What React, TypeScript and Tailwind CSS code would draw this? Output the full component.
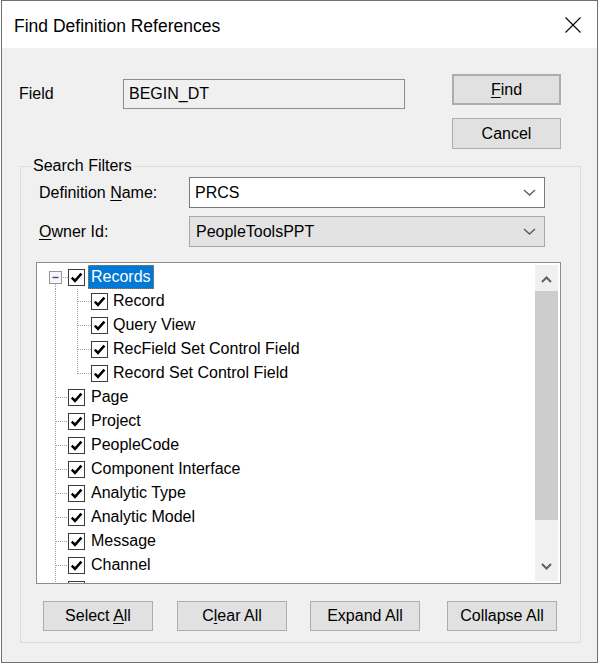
import React from 'react';

const childItems = ['Record', 'Query View', 'RecField Set Control Field', 'Record Set Control Field'];
const topItems = [
  'Page',
  'Project',
  'PeopleCode',
  'Component Interface',
  'Analytic Type',
  'Analytic Model',
  'Message',
  'Channel',
];

const DOT = '#a0a0a0';

function Check() {
  return (
    <div className="w-[17px] h-[17px] shrink-0 border border-[#3c3c3c] bg-white flex items-center justify-center">
      <svg width="13" height="13" viewBox="0 0 13 13">
        <path d="M1.8 6.6 L5 9.9 L11.4 2.6" fill="none" stroke="#000" strokeWidth="2.5" />
      </svg>
    </div>
  );
}

function TopGutter() {
  return (
    <svg width="31" height="24" className="shrink-0">
      <line x1="18.5" y1="0" x2="18.5" y2="24" stroke={DOT} strokeDasharray="1 1" />
      <line x1="19" y1="12.5" x2="31" y2="12.5" stroke={DOT} strokeDasharray="1 1" />
    </svg>
  );
}

function RootGutter() {
  return (
    <svg width="31" height="24" className="shrink-0">
      <rect x="12.5" y="6.5" width="12" height="12" fill="#f7f7f7" stroke="#969696" />
      <line x1="15.5" y1="12.5" x2="21.5" y2="12.5" stroke="#2e4f8f" strokeWidth="1.4" />
      <line x1="18.5" y1="19" x2="18.5" y2="24" stroke={DOT} strokeDasharray="1 1" />
      <line x1="26" y1="12.5" x2="31" y2="12.5" stroke={DOT} strokeDasharray="1 1" />
    </svg>
  );
}

function ChildGutter({ last }: { last: boolean }) {
  return (
    <svg width="54" height="24" className="shrink-0">
      <line x1="18.5" y1="0" x2="18.5" y2="24" stroke={DOT} strokeDasharray="1 1" />
      <line x1="40.5" y1="0" x2="40.5" y2={last ? 13 : 24} stroke={DOT} strokeDasharray="1 1" />
      <line x1="41" y1="12.5" x2="54" y2="12.5" stroke={DOT} strokeDasharray="1 1" />
    </svg>
  );
}

function ComboChevron() {
  return (
    <svg width="13" height="7" viewBox="0 0 13 7" className="shrink-0">
      <polyline points="1,1 6.5,6 12,1" fill="none" stroke="#5a5a5a" strokeWidth="1.3" />
    </svg>
  );
}

function ScrollChevron({ up }: { up: boolean }) {
  return (
    <svg width="11" height="7" viewBox="0 0 11 7">
      <polyline
        points={up ? '1,6 5.5,1.5 10,6' : '1,1 5.5,5.5 10,1'}
        fill="none"
        stroke="#606060"
        strokeWidth="2"
      />
    </svg>
  );
}

function DialogButton({ children, width = 'w-[110px]', className = '' }: { children: React.ReactNode; width?: string; className?: string }) {
  return (
    <div
      className={`${width} h-[30px] shrink-0 bg-[#e1e1e1] border border-[#adadad] flex items-center justify-center text-[16px] text-black ${className}`}
    >
      <span>{children}</span>
    </div>
  );
}

export default function App() {
  return (
    <div className="font-['Liberation_Sans',Arial,sans-serif] text-black">
      <div className="ml-[1px] w-[597px] h-[663px] border border-[#707070] flex flex-col bg-[#f0f0f0]">
        {/* Title bar */}
        <div className="h-[47px] shrink-0 bg-white flex items-center justify-between pl-[12px] pr-[16px] pt-[3px]">
          <span className="text-[17.5px]">Find Definition References</span>
          <svg width="16" height="16" viewBox="0 0 16 16" className="-mt-[2px]">
            <line x1="0.5" y1="0.5" x2="15.5" y2="15.5" stroke="#000" strokeWidth="1.1" />
            <line x1="15.5" y1="0.5" x2="0.5" y2="15.5" stroke="#000" strokeWidth="1.1" />
          </svg>
        </div>

        {/* Body */}
        <div className="flex-1 flex flex-col">
          <div className="flex pt-[26px] pl-[17px]">
            <div className="flex items-center mt-[5px] h-[30px]">
              <span className="w-[104px] text-[16px]">Field</span>
              <div className="w-[282px] h-[30px] border border-[#8c8c8c] bg-[#f0f0f0] flex items-center pl-[5px] text-[16px]">
                BEGIN_DT
              </div>
            </div>
            <div className="ml-[47px] flex flex-col gap-[13px]">
              <DialogButton width="w-[109px]" className="h-[31px] border-2 border-[#0078d7]">
                <span className="underline underline-offset-2">F</span>ind
              </DialogButton>
              <DialogButton width="w-[109px]" className="h-[31px]">
                Cancel
              </DialogButton>
            </div>
          </div>

          {/* Search Filters group */}
          <fieldset className="mt-[8px] ml-[18px] w-[561px] border border-[#dcdcdc] pb-[11px]">
            <legend className="ml-[10px] px-[2px] text-[16px] leading-[18px]">Search Filters</legend>

            <div className="mt-[2px] pl-[18px] flex items-center h-[31px]">
              <span className="w-[150px] text-[16px]">
                Definition <span className="underline underline-offset-2">N</span>ame:
              </span>
              <div className="w-[356px] h-[31px] border border-[#7a7a7a] bg-white flex items-center justify-between pl-[5px] pr-[8px] text-[16px]">
                <span>PRCS</span>
                <ComboChevron />
              </div>
            </div>

            <div className="mt-[8px] pl-[18px] flex items-center h-[31px]">
              <span className="w-[150px] text-[16px]">
                <span className="underline underline-offset-2">O</span>wner Id:
              </span>
              <div className="w-[356px] h-[31px] border border-[#a8a8a8] bg-[#e3e3e3] flex items-center justify-between pl-[6px] pr-[8px] text-[16px]">
                <span>PeopleToolsPPT</span>
                <ComboChevron />
              </div>
            </div>

            {/* Tree */}
            <div className="mt-[15px] ml-[15px] w-[525px] h-[322px] border border-[#8c8c8c] bg-white flex">
              <div className="flex-1 overflow-hidden pt-[2px] text-[16px]">
                <div className="flex items-center h-[24px]">
                  <RootGutter />
                  <Check />
                  <span className="ml-[3px] h-[24px] flex items-center px-[2px] bg-[#0078d7] text-white border border-dotted border-[#c97a1c]">
                    Records
                  </span>
                </div>
                {childItems.map((c, i) => (
                  <div key={c} className="flex items-center h-[24px]">
                    <ChildGutter last={i === childItems.length - 1} />
                    <Check />
                    <span className="ml-[5px]">{c}</span>
                  </div>
                ))}
                {topItems.map((t) => (
                  <div key={t} className="flex items-center h-[24px]">
                    <TopGutter />
                    <Check />
                    <span className="ml-[6px]">{t}</span>
                  </div>
                ))}
                <div className="flex items-center h-[24px]">
                  <TopGutter />
                  <Check />
                </div>
              </div>
              {/* Scrollbar */}
              <div className="w-[23px] mr-[2px] my-[2px] bg-[#f0f0f0] flex flex-col">
                <div className="h-[26px] flex items-start justify-center pt-[11px]">
                  <ScrollChevron up />
                </div>
                <div className="h-[229px] bg-[#cdcdcd]" />
                <div className="flex-1" />
                <div className="h-[26px] flex items-start justify-center pt-[8px]">
                  <ScrollChevron up={false} />
                </div>
              </div>
            </div>

            {/* Buttons */}
            <div className="mt-[17px] flex">
              <DialogButton className="ml-[22px]">
                Select <span className="underline underline-offset-2">A</span>ll
              </DialogButton>
              <DialogButton className="ml-[24px]">
                C<span className="underline underline-offset-2">l</span>ear All
              </DialogButton>
              <DialogButton className="ml-[23px]">Expand All</DialogButton>
              <DialogButton className="ml-[27px]">Collapse All</DialogButton>
            </div>
          </fieldset>
        </div>
      </div>
    </div>
  );
}
